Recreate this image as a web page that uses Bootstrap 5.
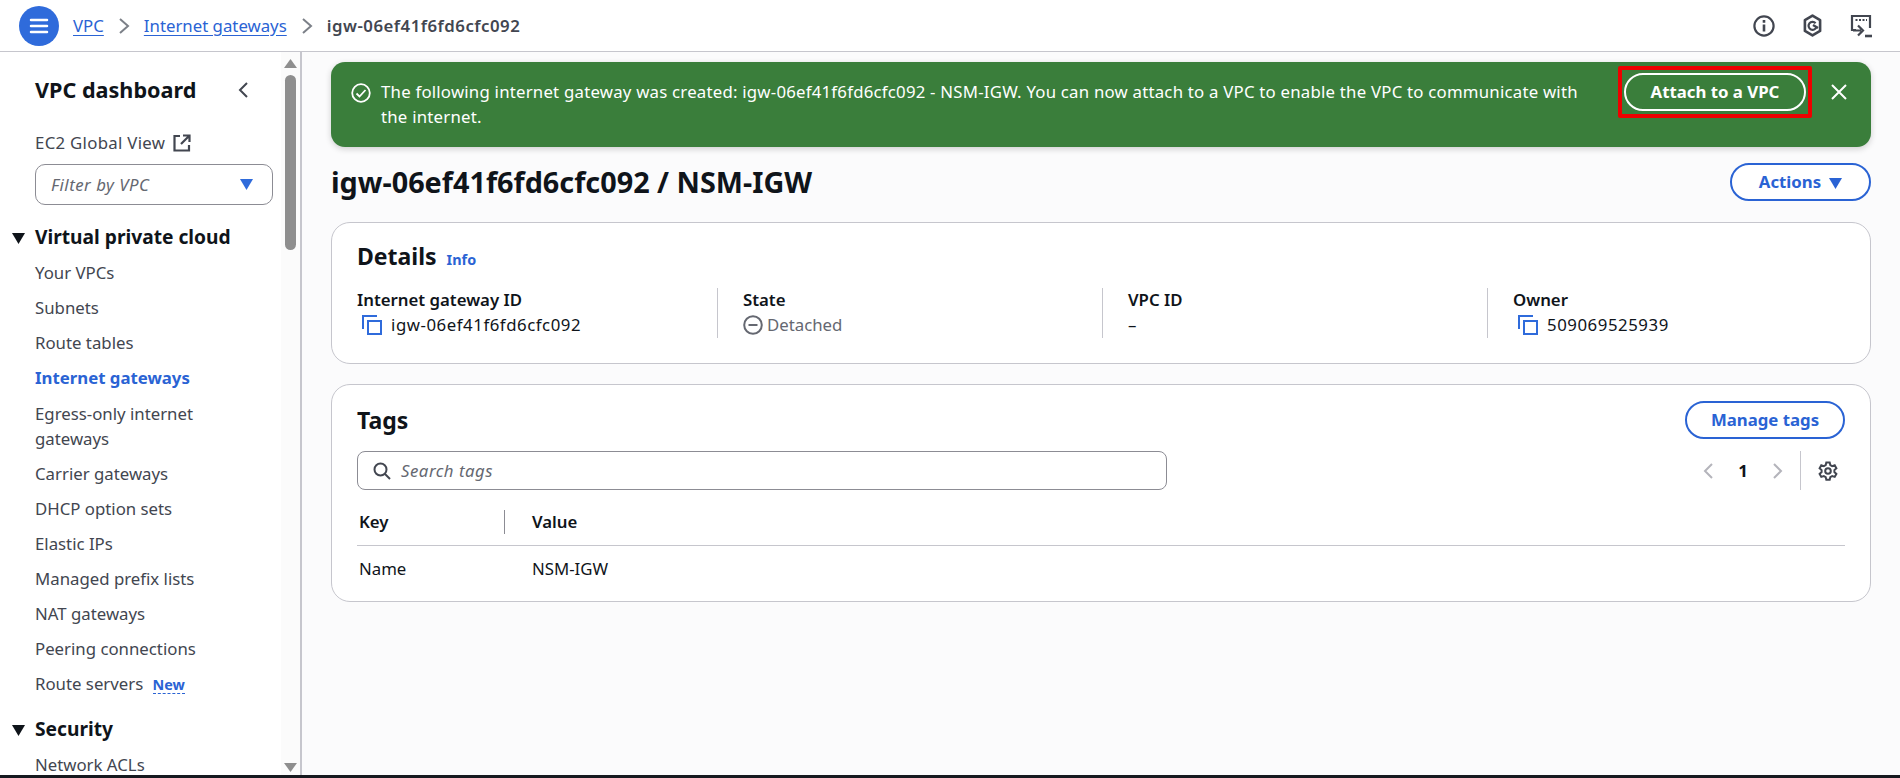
<!DOCTYPE html>
<html lang="en">
<head>
<meta charset="UTF-8">
<title>igw-06ef41f6fd6cfc092 / NSM-IGW</title>
<link href="https://cdn.jsdelivr.net/npm/bootstrap@5.3.0/dist/css/bootstrap.min.css" rel="stylesheet">
<style>
html, body { height: 778px; overflow: hidden; }
body { font-family: "Noto Sans", Roboto, "Liberation Sans", sans-serif; font-size: 16.8px; line-height: 24px; color: #0f141a; background: #fbfbfc; }
a { color: #2a63d4; }
.page-wrap { height: 775px; }
.top-bar { height: 52px; background: #fff; border-bottom: 1px solid #c6c6cd; padding: 0 28px 0 19px; flex: none; }
.menu-circle { width: 40px; height: 40px; border-radius: 50%; background: #2f6bdb; color: #fff; }
.crumbs { margin-left: 14px; gap: 0; }
.crumbs a { color: #2a63d4; text-underline-offset: 3px; }
.crumb-sep { width: 40px; color: #7c8088; }
.crumb-now { color: #424650; font-weight: 600; letter-spacing: .5px; }
.top-icons { gap: 28px; color: #424650; }
.body-row { height: 723px; min-height: 0; }
.side-col { width: 302px; flex: none; background: #fff; border-right: 2px solid #c6c6cd; overflow: hidden; }
.side-nav { flex: 1 1 auto; padding: 26px 0 0 35px; overflow: hidden; min-width: 0; }
.side-head { font-size: 21.6px; font-weight: 700; line-height: 24px; width: 214px; }
.global-link { margin-top: 29px; color: #424650; letter-spacing: .3px; }
.vpc-filter { width: 238px; height: 41px; margin-top: 9px; border: 1px solid #8c8c94; border-radius: 10px; padding: 0 19px 0 15px; font-style: italic; color: #656871; letter-spacing: .5px; }
.side-group { margin-top: 20px; font-size: 19.2px; font-weight: 700; line-height: 24px; position: relative; }
.side-links + .side-group { margin-top: 21px; }
.group-arrow { position: absolute; left: -23px; top: 8px; }
.side-links { list-style: none; margin: 0; padding: 0; width: 190px; }
.side-links li { margin-top: 11px; color: #424650; }
.side-links li:first-child { margin-top: 12px; }
.side-links li.current { color: #2a63d4; font-weight: 700; }
.side-links li.no-wrap-item { white-space: nowrap; }
.side-links li.two-lines { line-height: 25px; }
.new-tag { color: #2a63d4; font-size: 14.4px; font-weight: 700; border-bottom: 1px dashed #2a63d4; margin-left: 5px; line-height: 17px; display: inline-block; }
.fake-scroll { width: 19px; flex: none; background: #fbfbfb; padding: 7px 4px 3px; }
.scroll-thumb { width: 11px; height: 175px; margin-top: 7px; border-radius: 6px; background: #8e8e8e; }
.main-col { flex: 1 1 auto; padding: 10px 29px 0 29px; min-width: 0; }
.flash-box { background: #3a7e3b; color: #fff; border-radius: 14px; height: 85px; padding: 4px 23px 0 20px; box-shadow: 0 2px 6px rgba(0,0,0,.18); }
.flash-ico { margin-top: 17px; flex: none; }
.flash-text { width: 1225px; margin-left: 10px; margin-top: 13px; line-height: 25px; letter-spacing: .22px; }
.attach-ring { border: 4px solid #e00; border-radius: 2px; padding: 3px 2px; margin-left: auto; flex: none; }
.btn-attach { width: 182px; height: 38px; display: block; border: 2px solid #fff; border-radius: 20px; background: transparent; color: #fff; font-weight: 700; font-size: 16.8px; padding: 0; line-height: 1; }
.flash-close { margin-left: 18px; margin-top: 18px; color: #fff; flex: none; }
.title-row { margin-top: 16px; height: 38px; }
.page-title { font-size: 28.8px; font-weight: 700; line-height: 36px; margin: 0; }
.btn-pill { height: 38px; border: 2px solid #2a63d4; border-radius: 20px; background: #fff; color: #2a63d4; font-weight: 700; font-size: 16.8px; padding: 0; line-height: 1; }
.btn-actions { width: 141px; }
.btn-actions svg { margin-left: 8px; }
.btn-tags { width: 160px; }
.pane { background: #fff; border: 1px solid #c6c6cd; border-radius: 19px; margin: 0; }
.pane-details { height: 142px; margin-top: 21px; padding: 21px 25px 0; }
.pane-tags { height: 218px; margin-top: 20px; padding: 16px 25px 0; }
.pane-title { font-size: 23px; font-weight: 700; line-height: 24px; margin: 0; }
.info-tag { color: #2a63d4; font-size: 14.4px; font-weight: 700; margin-left: 10px; text-decoration: none; }
.detail-row { margin-top: 16px; }
.detail-col { flex: none; width: 385px; height: 50px; border-left: 1px solid #c6c6cd; padding-left: 25px; }
.detail-col.first-col { width: 360px; border-left: 0; padding-left: 0; }
.detail-col.last-col { width: 358px; }
.detail-label { font-weight: 600; line-height: 24px; }
.detail-val { line-height: 26px; gap: 9px; }
.id-text { letter-spacing: .55px; }
.copy-ico { margin-left: 5px; flex: none; color: #2f6bdb; }
.state-val { color: #656871; gap: 4px; }
.search-row { margin-top: 12px; }
.search-box { width: 810px; height: 39px; border: 1px solid #8c8c94; border-radius: 8px; background: #fff; padding: 0 15px; color: #656871; font-style: italic; gap: 10px; letter-spacing: .5px; }
.pager { gap: 0; padding-right: 7px; }
.pager-num { width: 58px; text-align: center; font-weight: 700; }
.pager-line { width: 1px; height: 39px; background: #c6c6cd; margin: 0 17px 0 16px; }
.tag-head { height: 56px; border-bottom: 1px solid #c6c6cd; font-weight: 600; padding: 20px 0 0 2px; }
.tag-divider { width: 1px; height: 24px; background: #8c8c94; }
.head-key { width: 145px; }
.head-val { padding-left: 27px; }
.tag-line { padding: 11px 0 0 2px; }
.key-cell { width: 173px; }
.page-edge { height: 3px; background: #16191f; }
</style>
</head>
<body>
<div class="page-wrap d-flex flex-column">
    <header class="top-bar d-flex align-items-center">
        <div class="menu-circle d-flex align-items-center justify-content-center">
            <svg width="20" height="18" viewBox="0 0 20 18"><path d="M2 3h16M2 9h16M2 15h16" stroke="currentColor" stroke-width="2.5" stroke-linecap="round"/></svg>
        </div>
        <nav class="crumbs d-flex align-items-center">
            <a href="#">VPC</a>
            <span class="crumb-sep d-flex justify-content-center"><svg width="12" height="18" viewBox="0 0 12 18"><path d="M2 2l8 7-8 7" fill="none" stroke="currentColor" stroke-width="2"/></svg></span>
            <a href="#">Internet gateways</a>
            <span class="crumb-sep d-flex justify-content-center"><svg width="12" height="18" viewBox="0 0 12 18"><path d="M2 2l8 7-8 7" fill="none" stroke="currentColor" stroke-width="2"/></svg></span>
            <span class="crumb-now">igw-06ef41f6fd6cfc092</span>
        </nav>
        <div class="top-icons ms-auto d-flex align-items-center">
            <svg width="22" height="22" viewBox="0 0 22 22" fill="none" stroke="currentColor" stroke-width="2.2"><circle cx="11" cy="11" r="9.6"/><path d="M11 9.5v7M11 5v2.8" stroke-width="2.6"/></svg>
            <svg width="19" height="23" viewBox="0 0 19 23" fill="none" stroke="currentColor" stroke-width="2.6"><path d="M9.5 1.6l7.6 4.5v10.8l-7.6 4.5-7.600-4.500V6.100z" stroke-linejoin="round"/><path d="M12.600 9.200a4 4 0 1 0 .9 3.400" stroke-width="2.200"/><path d="M10 11l5 3" stroke-width="2.400"/></svg>
            <svg width="22" height="24" viewBox="0 0 22 24" fill="none" stroke="currentColor" stroke-width="2.2"><path d="M6 16H2V2h18v12"/><path d="M5.500 6h2M9 6h2M12.500 6h2M16 6h1" stroke-width="2"/><path d="M3 16.500h8M8 11.500l5 5-5 5" stroke-width="2.200"/><path d="M15 22h7" stroke-width="2.600"/></svg>
        </div>
    </header>

    <div class="body-row d-flex">
        <aside class="side-col d-flex">
            <div class="side-nav">
                <div class="side-head d-flex justify-content-between align-items-center">
                    <span>VPC dashboard</span>
                    <svg width="12" height="18" viewBox="0 0 12 18"><path d="M10 2L3 9l7 7" fill="none" stroke="#424650" stroke-width="2"/></svg>
                </div>
                <div class="global-link d-flex align-items-center gap-2">
                    <span>EC2 Global View</span>
                    <svg width="18" height="18" viewBox="0 0 18 18" fill="none" stroke="#424650" stroke-width="2.2"><path d="M7 2H1.500v14.500H16V11M10 1.500h6.500V8M16 2L8 10"/></svg>
                </div>
                <div class="vpc-filter d-flex align-items-center justify-content-between">
                    <span>Filter by VPC</span>
                    <svg width="13" height="11" viewBox="0 0 13 11"><path d="M0 0h13L6.500 11z" fill="#2f6bdb"/></svg>
                </div>
                <div class="side-group text-nowrap">
                    <svg class="group-arrow" width="13" height="11" viewBox="0 0 13 11"><path d="M0 0h13L6.500 11z" fill="#0f141a"/></svg>
                    Virtual private cloud
                </div>
                <ul class="side-links">
                    <li>Your VPCs</li>
                    <li>Subnets</li>
                    <li>Route tables</li>
                    <li class="current no-wrap-item">Internet gateways</li>
                    <li class="two-lines">Egress-only internet gateways</li>
                    <li>Carrier gateways</li>
                    <li>DHCP option sets</li>
                    <li>Elastic IPs</li>
                    <li class="no-wrap-item">Managed prefix lists</li>
                    <li>NAT gateways</li>
                    <li class="no-wrap-item">Peering connections</li>
                    <li class="no-wrap-item">Route servers <span class="new-tag">New</span></li>
                </ul>
                <div class="side-group">
                    <svg class="group-arrow" width="13" height="11" viewBox="0 0 13 11"><path d="M0 0h13L6.500 11z" fill="#0f141a"/></svg>
                    Security
                </div>
                <ul class="side-links">
                    <li>Network ACLs</li>
                </ul>
            </div>
            <div class="fake-scroll d-flex flex-column align-items-center">
                <svg width="13" height="9" viewBox="0 0 13 9"><path d="M0 9L6.500 0 13 9z" fill="#8e8e8e"/></svg>
                <div class="scroll-thumb"></div>
                <svg class="mt-auto" width="13" height="9" viewBox="0 0 13 9"><path d="M0 0h13L6.500 9z" fill="#8e8e8e"/></svg>
            </div>
        </aside>

        <main class="main-col">
            <div class="flash-box d-flex align-items-start">
                <svg class="flash-ico" width="20" height="20" viewBox="0 0 20 20" fill="none" stroke="#fff" stroke-width="1.8"><circle cx="10" cy="10" r="8.800"/><path d="M5.500 10.500l3 3 6-6.500"/></svg>
                <div class="flash-text">The following internet gateway was created: igw-06ef41f6fd6cfc092 - NSM-IGW. You can now attach to a VPC to enable the VPC to communicate with the internet.</div>
                <div class="attach-ring"><button class="btn-attach" type="button">Attach to a VPC</button></div>
                <svg class="flash-close" width="18" height="16" viewBox="0 0 18 16"><path d="M2 1l14 14M16 1L2 15" stroke="currentColor" stroke-width="2"/></svg>
            </div>

            <div class="title-row d-flex justify-content-between align-items-center">
                <h1 class="page-title">igw-06ef41f6fd6cfc092 / NSM-IGW</h1>
                <button class="btn-pill btn-actions" type="button">Actions<svg width="13" height="11" viewBox="0 0 13 11"><path d="M0 0h13L6.500 11z" fill="#2a63d4"/></svg></button>
            </div>

            <section class="pane pane-details">
                <div class="d-flex align-items-baseline">
                    <h2 class="pane-title">Details</h2>
                    <a class="info-tag" href="#">Info</a>
                </div>
                <div class="detail-row d-flex">
                    <div class="detail-col first-col">
                        <div class="detail-label">Internet gateway ID</div>
                        <div class="detail-val d-flex align-items-center">
                            <svg class="copy-ico" width="20" height="20" viewBox="0 0 20 20" fill="none" stroke="currentColor" stroke-width="2"><path d="M1 14V1h14"/><rect x="6" y="6" width="13" height="13"/></svg>
                            <span class="id-text">igw-06ef41f6fd6cfc092</span>
                        </div>
                    </div>
                    <div class="detail-col">
                        <div class="detail-label">State</div>
                        <div class="detail-val state-val d-flex align-items-center">
                            <svg width="20" height="20" viewBox="0 0 20 20" fill="none" stroke="currentColor" stroke-width="2"><circle cx="10" cy="10" r="8.800"/><path d="M5.500 10h9"/></svg>
                            <span>Detached</span>
                        </div>
                    </div>
                    <div class="detail-col">
                        <div class="detail-label">VPC ID</div>
                        <div class="detail-val">–</div>
                    </div>
                    <div class="detail-col last-col">
                        <div class="detail-label">Owner</div>
                        <div class="detail-val d-flex align-items-center">
                            <svg class="copy-ico" width="20" height="20" viewBox="0 0 20 20" fill="none" stroke="currentColor" stroke-width="2"><path d="M1 14V1h14"/><rect x="6" y="6" width="13" height="13"/></svg>
                            <span class="id-text">509069525939</span>
                        </div>
                    </div>
                </div>
            </section>

            <section class="pane pane-tags">
                <div class="d-flex justify-content-between align-items-center">
                    <h2 class="pane-title">Tags</h2>
                    <button class="btn-pill btn-tags" type="button">Manage tags</button>
                </div>
                <div class="search-row d-flex justify-content-between align-items-center">
                    <div class="search-box d-flex align-items-center">
                        <svg width="18" height="18" viewBox="0 0 18 18" fill="none" stroke="#424650" stroke-width="2"><circle cx="7.500" cy="7.500" r="6"/><path d="M12 12l5 5"/></svg>
                        <span>Search tags</span>
                    </div>
                    <div class="pager d-flex align-items-center">
                        <svg width="12" height="18" viewBox="0 0 12 18"><path d="M10 2L3 9l7 7" fill="none" stroke="#b4b4bb" stroke-width="2"/></svg>
                        <span class="pager-num">1</span>
                        <svg width="12" height="18" viewBox="0 0 12 18"><path d="M2 2l7 7-7 7" fill="none" stroke="#b4b4bb" stroke-width="2"/></svg>
                        <span class="pager-line"></span>
                        <svg width="20" height="20" viewBox="0 0 20 20" fill="none" stroke="#424650" stroke-width="2"><circle cx="10" cy="10" r="2.800"/><path d="M8.300 1.500h3.400l.6 2.600 1.900 1 2.500-.8 1.700 3-2 1.800v2l2 1.800-1.700 3-2.500-.8-1.900 1-.6 2.600H8.300l-.6-2.600-1.900-1-2.500.8-1.700-3 2-1.800v-2l-2-1.800 1.700-3 2.500.8 1.900-1z"/></svg>
                    </div>
                </div>
                <div class="tag-head d-flex">
                    <span class="head-key">Key</span>
                    <span class="tag-divider"></span>
                    <span class="head-val">Value</span>
                </div>
                <div class="tag-line d-flex">
                    <span class="key-cell">Name</span>
                    <span>NSM-IGW</span>
                </div>
            </section>
        </main>
    </div>
</div>
<div class="page-edge"></div>
<script src="https://cdn.jsdelivr.net/npm/bootstrap@5.3.0/dist/js/bootstrap.bundle.min.js"></script>
</body>
</html>
